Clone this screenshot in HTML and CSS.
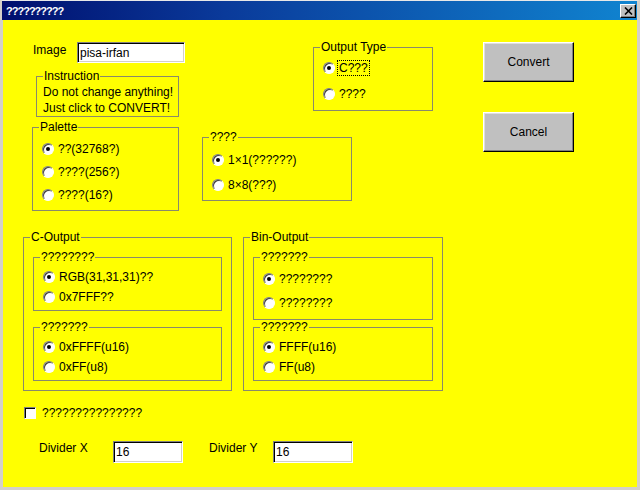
FILE: index.html
```html
<!DOCTYPE html>
<html lang="en">
<head>
  <meta charset="UTF-8">
  <title>??????????</title>
  <link rel="stylesheet" href="styles.css">
</head>
<body>
  <div class="window">
    <div class="titlebar">
      <span class="title">??????????</span>
      <span class="close">
        <svg width="9" height="8" viewBox="0 0 9 8"><path d="M1 0.5 L8 7.5 M8 0.5 L1 7.5" stroke="#000" stroke-width="1.6" fill="none"/></svg>
      </span>
    </div>

    <div class="client">
      <div class="top">
        <div class="left-block">
          <div class="top-row">
            <div class="image-col">
              <div class="image-row">
                <label class="field-label" for="image">Image</label>
                <input class="field image-field" id="image" type="text" value="pisa-irfan">
              </div>
              <div class="group instruction">
                <div class="group-title">Instruction</div>
                <p class="note">Do not change anything!<br>Just click to CONVERT!</p>
              </div>
            </div>

            <div class="group output-type">
              <div class="group-title">Output Type</div>
              <div class="opts">
                <div class="opt"><span class="radio on"></span><span class="opt-text focus">C???</span></div>
                <div class="opt"><span class="radio"></span><span class="opt-text">????</span></div>
              </div>
            </div>
          </div>

          <div class="bottom-row">
            <div class="group palette">
              <div class="group-title">Palette</div>
              <div class="opts">
                <div class="opt"><span class="radio on"></span><span class="opt-text">??(32768?)</span></div>
                <div class="opt"><span class="radio"></span><span class="opt-text">????(256?)</span></div>
                <div class="opt"><span class="radio"></span><span class="opt-text">????(16?)</span></div>
              </div>
            </div>

            <div class="group mode">
              <div class="group-title">????</div>
              <div class="opts">
                <div class="opt"><span class="radio on"></span><span class="opt-text">1×1(??????)</span></div>
                <div class="opt"><span class="radio"></span><span class="opt-text">8×8(???)</span></div>
              </div>
            </div>
          </div>
        </div>

        <div class="buttons">
          <button class="btn">Convert</button>
          <button class="btn">Cancel</button>
        </div>
      </div>

      <div class="outputs">
        <div class="group c-output">
          <div class="group-title">C-Output</div>
          <div class="group inner c-fmt">
            <div class="group-title">????????</div>
            <div class="opts">
              <div class="opt"><span class="radio on"></span><span class="opt-text">RGB(31,31,31)??</span></div>
              <div class="opt"><span class="radio"></span><span class="opt-text">0x7FFF??</span></div>
            </div>
          </div>
          <div class="group inner second">
            <div class="group-title">???????</div>
            <div class="opts">
              <div class="opt"><span class="radio on"></span><span class="opt-text">0xFFFF(u16)</span></div>
              <div class="opt"><span class="radio"></span><span class="opt-text">0xFF(u8)</span></div>
            </div>
          </div>
        </div>

        <div class="group bin-output">
          <div class="group-title">Bin-Output</div>
          <div class="group inner bin-fmt">
            <div class="group-title">???????</div>
            <div class="opts">
              <div class="opt"><span class="radio on"></span><span class="opt-text">????????</span></div>
              <div class="opt"><span class="radio"></span><span class="opt-text">????????</span></div>
            </div>
          </div>
          <div class="group inner second">
            <div class="group-title">???????</div>
            <div class="opts">
              <div class="opt"><span class="radio on"></span><span class="opt-text">FFFF(u16)</span></div>
              <div class="opt"><span class="radio"></span><span class="opt-text">FF(u8)</span></div>
            </div>
          </div>
        </div>
      </div>

      <div class="check-row">
        <span class="checkbox"></span>
        <span>???????????????</span>
      </div>

      <div class="divider-row">
        <label class="div-label div-x" for="divX">Divider X</label>
        <input class="field div-field-x" id="divX" type="text" value="16">
        <label class="div-label div-y" for="divY">Divider Y</label>
        <input class="field div-field-y" id="divY" type="text" value="16">
      </div>
    </div>
  </div>
</body>
</html>
```

FILE: styles.css
```css
body {
  margin: 0;
  font-family: "Liberation Sans", Arial, sans-serif;
  font-size: 12px;
  color: #000;
  background: #d4d0c8;
}
.window {
  width: 640px;
  height: 490px;
  box-sizing: border-box;
  border-top: 1px solid #e8e8e8;
  border-left: 3px solid #d4d0c8;
  border-right: 3px solid #d4d0c8;
  border-bottom: 3px solid #d4d0c8;
  box-shadow: inset 1px 0 #fff;
  display: flex;
  flex-direction: column;
}
.titlebar {
  height: 19px;
  margin-left: -1px;
  display: flex;
  align-items: center;
  justify-content: space-between;
  padding: 0 1px 0 4px;
  background: linear-gradient(to right, #000f6e, #0a3a9a 35%, #1084d0);
}
.title {
  color: #fff;
  font-weight: bold;
  font-size: 11px;
  letter-spacing: -1px;
}
.close {
  width: 16px;
  height: 14px;
  box-sizing: border-box;
  background: #c0c0c0;
  border: 1px solid;
  border-color: #fff #000 #000 #fff;
  box-shadow: inset -1px -1px #808080;
  display: flex;
  align-items: center;
  justify-content: center;
}
.client {
  flex: 1;
  background: #ffff00;
}

/* top area */
.top {
  display: flex;
  padding-left: 29px;
}
.left-block {
  width: 401px;
}
.top-row {
  display: flex;
  height: 97px;
}
.image-col {
  width: 153px;
}
.image-row {
  display: flex;
  align-items: center;
  margin-top: 22px;
  padding-left: 1px;
}
.field-label {
  width: 44px;
  margin-top: -5px;
}
.field {
  box-sizing: border-box;
  height: 21px;
  padding: 0 2px;
  font: inherit;
  background: #fff;
  border: 1px solid;
  border-color: #808080 #fff #fff #808080;
  box-shadow: inset 1px 1px #000, inset -1px -1px #d4d0c8;
  outline: none;
}
.image-field {
  width: 108px;
}
.bottom-row {
  display: flex;
  margin-top: 10px;
}
.buttons {
  display: flex;
  flex-direction: column;
  margin-left: 50px;
  padding-top: 22px;
}
.btn {
  width: 91px;
  height: 40px;
  font: inherit;
  background: #c0c0c0;
  border: 1px solid;
  border-color: #fff #000 #000 #fff;
  box-shadow: inset -1px -1px #808080, inset 1px 1px #dfdfdf;
  padding: 0;
}
.btn + .btn {
  margin-top: 30px;
}

/* group boxes */
.group {
  box-sizing: border-box;
  border: 1px solid #8a8a6a;
}
.group-title {
  width: fit-content;
  margin: -8px 0 0 6px;
  padding: 0 1px;
  line-height: 14px;
  background: #ffff00;
}
.instruction {
  width: 143px;
  height: 41px;
  margin: 13px 0 0 4px;
}
.note {
  margin: 1px 0 0;
  padding-left: 6px;
  line-height: 16px;
}
.output-type {
  width: 120px;
  height: 64px;
  margin: 27px 0 0 128px;
}
.palette {
  width: 147px;
  height: 84px;
}
.mode {
  width: 150px;
  height: 64px;
  margin: 10px 0 0 23px;
}

/* radio options */
.opts {
  padding-left: 9px;
  margin-top: 3px;
}
.opt {
  display: flex;
  align-items: center;
  height: 20px;
}
.output-type .opts { margin-top: 1px; }
.output-type .opt { height: 26px; }
.palette .opt { height: 23px; }
.mode .opt { height: 25px; }
.bin-fmt .opt { height: 24px; }
.radio {
  width: 12px;
  height: 12px;
  box-sizing: border-box;
  border-radius: 50%;
  background: #fff;
  border: 1px solid;
  border-color: #808080 #fff #fff #808080;
  box-shadow: inset 1px 1px #404040;
  margin-right: 2px;
  flex-shrink: 0;
}
.radio.on::after {
  content: "";
  display: block;
  width: 4px;
  height: 4px;
  margin: 3px;
  border-radius: 50%;
  background: #000;
}
.opt-text {
  line-height: 14px;
  padding: 0 1px;
  border: 1px dotted transparent;
}
.opt-text.focus {
  border-color: #000;
}

/* output groups */
.outputs {
  display: flex;
  margin-top: 26px;
  padding-left: 20px;
}
.c-output {
  width: 209px;
  height: 154px;
}
.bin-output {
  width: 200px;
  height: 154px;
  margin-left: 11px;
}
.inner {
  height: 54px;
  margin: 13px 0 0 9px;
}
.c-output .inner { width: 189px; }
.bin-output .inner { width: 180px; }
.bin-fmt { height: 63px; }
.c-output .second { margin-top: 16px; }
.bin-output .second { margin-top: 7px; }

/* bottom rows */
.check-row {
  display: flex;
  align-items: center;
  margin-top: 15px;
  padding-left: 21px;
  height: 13px;
}
.checkbox {
  width: 12px;
  height: 12px;
  box-sizing: border-box;
  background: #fff;
  border: 1px solid;
  border-color: #808080 #fff #fff #808080;
  box-shadow: inset 1px 1px #000;
  margin-right: 6px;
}
.divider-row {
  display: flex;
  align-items: flex-start;
  margin-top: 22px;
  padding-left: 36px;
}
.div-label {
  line-height: 14px;
}
.div-x { width: 74px; }
.div-y { width: 64px; margin-left: 26px; }
.div-field-x { width: 70px; height: 22px; }
.div-field-y { width: 80px; height: 22px; }
```
